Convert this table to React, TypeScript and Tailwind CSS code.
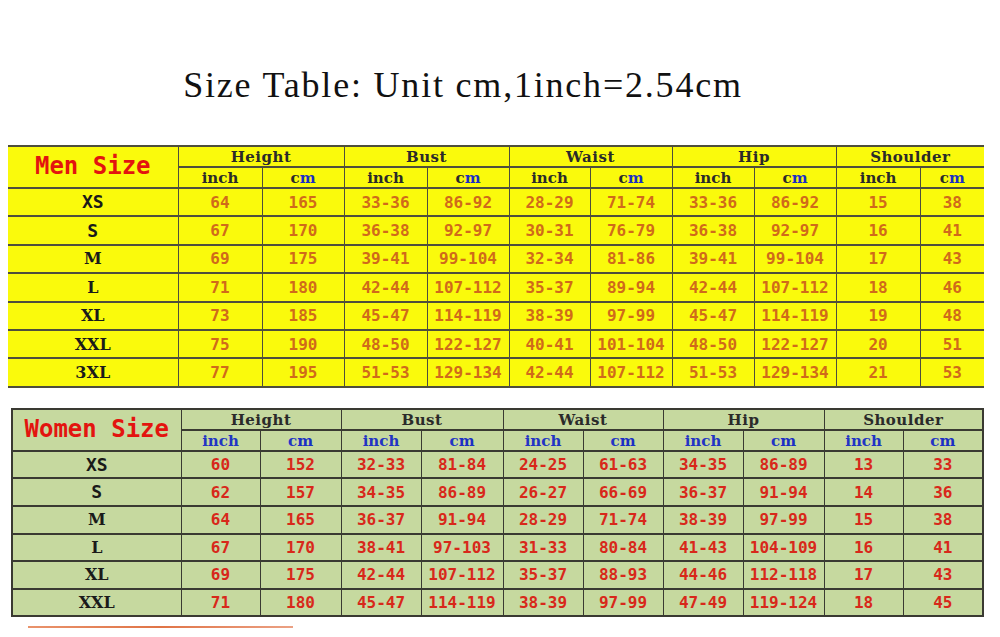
import React from 'react';

type Row = string[];

const menRows: Row[] = [
  ['XS', '64', '165', '33-36', '86-92', '28-29', '71-74', '33-36', '86-92', '15', '38'],
  ['S', '67', '170', '36-38', '92-97', '30-31', '76-79', '36-38', '92-97', '16', '41'],
  ['M', '69', '175', '39-41', '99-104', '32-34', '81-86', '39-41', '99-104', '17', '43'],
  ['L', '71', '180', '42-44', '107-112', '35-37', '89-94', '42-44', '107-112', '18', '46'],
  ['XL', '73', '185', '45-47', '114-119', '38-39', '97-99', '45-47', '114-119', '19', '48'],
  ['XXL', '75', '190', '48-50', '122-127', '40-41', '101-104', '48-50', '122-127', '20', '51'],
  ['3XL', '77', '195', '51-53', '129-134', '42-44', '107-112', '51-53', '129-134', '21', '53'],
];

const womenRows: Row[] = [
  ['XS', '60', '152', '32-33', '81-84', '24-25', '61-63', '34-35', '86-89', '13', '33'],
  ['S', '62', '157', '34-35', '86-89', '26-27', '66-69', '36-37', '91-94', '14', '36'],
  ['M', '64', '165', '36-37', '91-94', '28-29', '71-74', '38-39', '97-99', '15', '38'],
  ['L', '67', '170', '38-41', '97-103', '31-33', '80-84', '41-43', '104-109', '16', '41'],
  ['XL', '69', '175', '42-44', '107-112', '35-37', '88-93', '44-46', '112-118', '17', '43'],
  ['XXL', '71', '180', '45-47', '114-119', '38-39', '97-99', '47-49', '119-124', '18', '45'],
];

const groups = ['Height', 'Bust', 'Waist', 'Hip', 'Shoulder'];

const menCols = [170, 84, 82, 83, 82, 81, 82, 82, 82, 84, 64];
const womenCols = [169, 79, 81, 80, 82, 80, 80, 80, 81, 79, 80];

const slab = { fontFamily: '"DejaVu Serif", "Liberation Serif", serif' };
const sansMono = { fontFamily: '"DejaVu Sans Mono", "Liberation Mono", monospace' };
const titleFont = { fontFamily: '"Liberation Serif", "DejaVu Serif", serif' };

// XS and S look sans in the picture, the rest are slab serif
function SizeLabel({ label }: { label: string }) {
  const sans = label === 'XS' || label === 'S';
  return (
    <span
      className={sans ? 'text-[18px] font-bold text-[#1a1a1a]' : 'text-[16px] font-bold text-[#1a1a1a]'}
      style={sans ? sansMono : slab}
    >
      {label}
    </span>
  );
}

function SizeTable({
  title,
  rows,
  cols,
  women,
}: {
  title: string;
  rows: Row[];
  cols: number[];
  women?: boolean;
}) {
  const bg = women ? 'bg-[#c6d99f]' : 'bg-[#fafa0c]';
  const line = women ? 'border-[#3a3a32]' : 'border-[#4e4e3c]';
  const cell = `border-y-2 border-x-[1.5px] ${line} p-0 text-center align-middle`;
  const numColor = women ? 'text-[#d8281a]' : 'text-[#d06a1a]';
  const subColor = women ? 'text-[#2234c4]' : 'text-[#2a2a2a]';
  const total = cols.reduce((a, b) => a + b, 0);

  return (
    <table
      className={`table-fixed border-collapse ${bg} ${women ? `border-2 ${line}` : ''}`}
      style={{ width: total }}
    >
      <colgroup>
        {cols.map((w, i) => (
          <col key={i} style={{ width: w }} />
        ))}
      </colgroup>
      <thead>
        <tr className="h-[21px]">
          <td rowSpan={2} className={`${cell} ${women ? '' : 'border-l-0'}`}>
            <span className="text-[24px] font-bold text-[#e3140f] leading-none" style={sansMono}>
              {title}
            </span>
          </td>
          {groups.map((g, i) => (
            <td
              key={g}
              colSpan={2}
              className={`${cell} leading-none ${!women && i === groups.length - 1 ? 'border-r-0' : ''}`}
            >
              <span className="text-[15px] font-bold text-[#2a2a2a] tracking-[0.5px]" style={slab}>
                {g}
              </span>
            </td>
          ))}
        </tr>
        <tr className="h-[21px]">
          {groups.map((g, i) => (
            <React.Fragment key={g}>
              <td className={`${cell} leading-none`}>
                <span className={`text-[15px] font-bold ${subColor}`} style={slab}>
                  inch
                </span>
              </td>
              <td
                className={`${cell} leading-none ${!women && i === groups.length - 1 ? 'border-r-0' : ''}`}
              >
                <span className={`text-[15px] font-bold ${subColor}`} style={slab}>
                  c<span className="text-[#1b2fc4]">m</span>
                </span>
              </td>
            </React.Fragment>
          ))}
        </tr>
      </thead>
      <tbody>
        {rows.map((r) => (
          <tr key={r[0]} className={women ? 'h-[27.6px]' : 'h-[28.4px]'}>
            {r.map((v, i) => (
              <td
                key={i}
                className={`${cell} leading-none ${!women && i === 0 ? 'border-l-0' : ''} ${
                  !women && i === r.length - 1 ? 'border-r-0' : ''
                }`}
              >
                {i === 0 ? (
                  <SizeLabel label={v} />
                ) : (
                  <span className={`text-[16px] font-bold ${numColor}`} style={sansMono}>
                    {v}
                  </span>
                )}
              </td>
            ))}
          </tr>
        ))}
      </tbody>
    </table>
  );
}

export default function App() {
  return (
    <div className="w-[1000px] h-[637px] bg-white overflow-hidden">
      {/* title */}
      <div className="pt-[65px] flex justify-center pr-[74px]">
        <div
          className="text-[36px] leading-[40px] h-[40px] text-[#111] whitespace-nowrap tracking-[1.8px]"
          style={titleFont}
        >
          Size Table: Unit cm,1inch=2.54cm
        </div>
      </div>

      <div className="mt-[40px] ml-[8px]">
        <SizeTable title="Men Size" rows={menRows} cols={menCols} />
      </div>

      <div className="mt-[20px] ml-[11px]">
        <SizeTable title="Women Size" rows={womenRows} cols={womenCols} women />
      </div>

      <div className="mt-[9px] ml-[28px] w-[265px] h-[2px] bg-gradient-to-r from-[#e9936c] via-[#e07446] to-[#eba184]" />
    </div>
  );
}
